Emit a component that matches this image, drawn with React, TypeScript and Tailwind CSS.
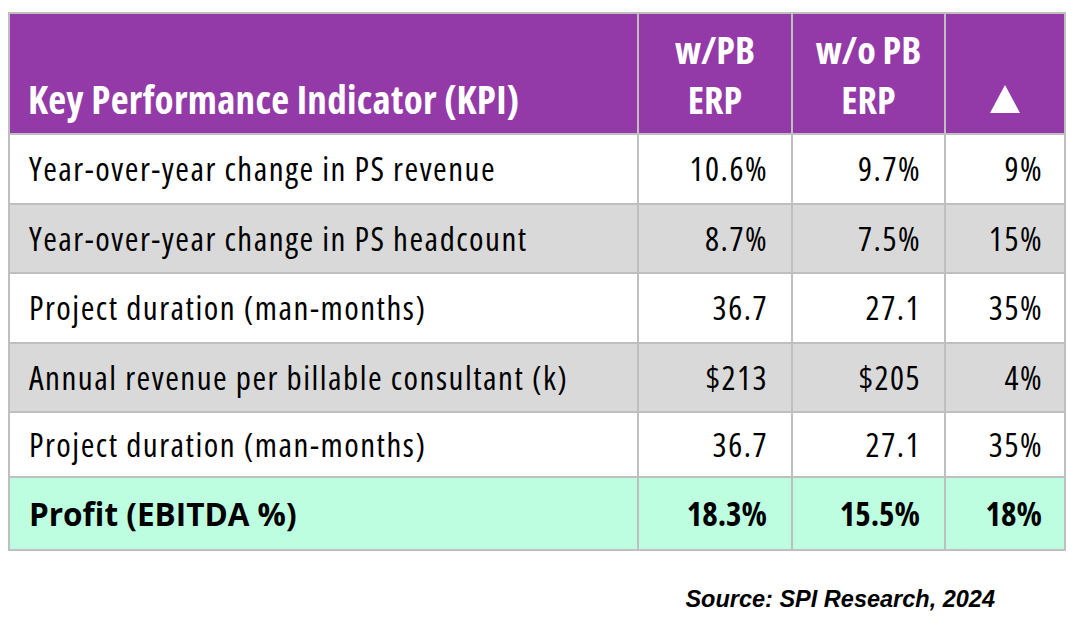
import React from "react";

const rows = [
  { label: "Year-over-year change in PS revenue", a: "10.6%", b: "9.7%", c: "9%", bg: "bg-white", h: "h-[68px]" },
  { label: "Year-over-year change in PS headcount", a: "8.7%", b: "7.5%", c: "15%", bg: "bg-[#d9d9d9]", h: "h-[67px]" },
  { label: "Project duration (man-months)", a: "36.7", b: "27.1", c: "35%", bg: "bg-white", h: "h-[68px]" },
  { label: "Annual revenue per billable consultant (k)", a: "$213", b: "$205", c: "4%", bg: "bg-[#d9d9d9]", h: "h-[67px]" },
  { label: "Project duration (man-months)", a: "36.7", b: "27.1", c: "35%", bg: "bg-white", h: "h-[63px]" },
];

const font = { fontFamily: '"Open Sans", "DejaVu Sans Condensed", sans-serif' };

export default function App() {
  return (
    <div className="w-[1076px] h-[636px] bg-white relative overflow-hidden">
      <div className="pt-[12px] pl-[8px]">
        <div
          className="w-[1058px] bg-[#bfbfbf] p-[2px] grid grid-cols-[627px_152px_151px_118px] gap-[2px]"
          style={font}
        >
          {/* header */}
          <div className="h-[119px] bg-[#943aa8] flex items-end pl-[18px] pb-[9px] text-white font-bold text-[39px] leading-[50px] tracking-[0.3px] [font-stretch:75%]">
            Key Performance Indicator (KPI)
          </div>
          <div className="bg-[#943aa8] flex items-end justify-center pb-[9px] text-white font-bold text-[38px] leading-[50px] text-center [font-stretch:75%]">
            w/PB<br />ERP
          </div>
          <div className="bg-[#943aa8] flex items-end justify-center pb-[9px] text-white font-bold text-[38px] leading-[50px] text-center [font-stretch:75%]">
            w/o PB<br />ERP
          </div>
          <div className="bg-[#943aa8] flex items-end justify-center pb-[20px]">
            <svg width="30" height="28" viewBox="0 0 30 28">
              <polygon points="15,0 30,28 0,28" fill="#ffffff" />
            </svg>
          </div>
          {rows.map((r, i) => (
            <React.Fragment key={i}>
              <div className={`${r.bg} ${r.h} flex items-center pl-[19px] text-[33px] tracking-[1.5px] text-black [font-stretch:75%]`}>{r.label}</div>
              <div className={`${r.bg} flex items-center justify-end pr-[23px] text-[33px] tracking-[1.5px] text-black [font-stretch:75%]`}>{r.a}</div>
              <div className={`${r.bg} flex items-center justify-end pr-[23px] text-[33px] tracking-[1.5px] text-black [font-stretch:75%]`}>{r.b}</div>
              <div className={`${r.bg} flex items-center justify-end pr-[21px] text-[33px] tracking-[1.5px] text-black [font-stretch:75%]`}>{r.c}</div>
            </React.Fragment>
          ))}
          <div className="bg-[#bdfde0] h-[71px] flex items-center pl-[19px] text-[31.5px] font-bold text-black [font-stretch:92%]">Profit (EBITDA %)</div>
          <div className="bg-[#bdfde0] flex items-center justify-end pr-[24px] text-[33px] font-bold text-black [font-stretch:75%]">18.3%</div>
          <div className="bg-[#bdfde0] flex items-center justify-end pr-[24px] text-[33px] font-bold text-black [font-stretch:75%]">15.5%</div>
          <div className="bg-[#bdfde0] flex items-center justify-end pr-[22px] text-[33px] font-bold text-black [font-stretch:75%]">18%</div>
        </div>
      </div>
      <div className="flex justify-end pr-[81px] pt-[31px]">
        <span
          className="text-[23.5px] font-bold italic text-black"
          style={{ fontFamily: '"Liberation Sans", Arial, sans-serif' }}
        >
          Source: SPI Research, 2024
        </span>
      </div>
    </div>
  );
}
